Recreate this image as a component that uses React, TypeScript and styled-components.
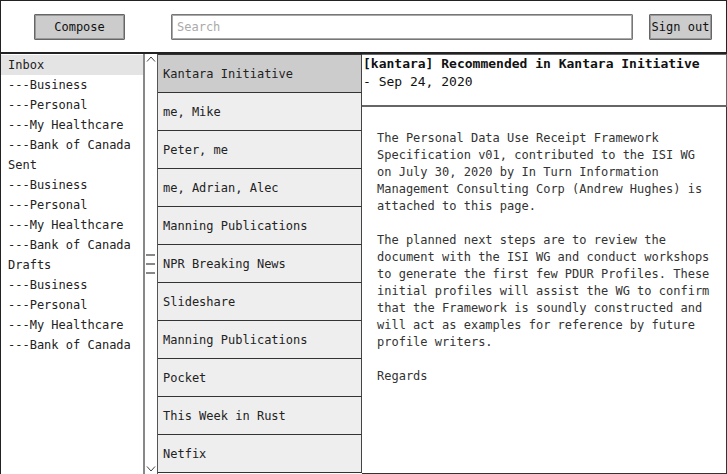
import React from 'react';
import styled, { createGlobalStyle } from 'styled-components';

const GlobalStyle = createGlobalStyle`
  html, body {
    margin: 0;
    padding: 0;
    background: #ffffff;
  }
  * {
    box-sizing: border-box;
  }
`;

const mono = `"DejaVu Sans Mono", "Liberation Mono", monospace`;

// Moldura geral
const Frame = styled.div`
  width: 727px;
  height: 474px;
  display: flex;
  flex-direction: column;
  font-family: ${mono};
  font-size: 12px;
  color: #222;
  overflow: hidden;
`;

// Barra superior
const TopBar = styled.div`
  height: 54px;
  flex-shrink: 0;
  display: flex;
  align-items: center;
  border: 1px solid #222;
  border-bottom-width: 2px;
  padding-left: 33px;
`;

const Button = styled.button<{ w: number }>`
  width: ${p => p.w}px;
  height: 26px;
  background: #cccccc;
  border: 1px solid #666;
  box-shadow: inset 0 0 0 1px #999;
  border-radius: 1px;
  font-family: ${mono};
  font-size: 12px;
  color: #111;
  padding: 0;
`;

const SearchInput = styled.input`
  width: 462px;
  height: 26px;
  margin-left: 46px;
  margin-right: 16px;
  border: 1px solid #777;
  box-shadow: inset 0 0 0 1px #aaa;
  border-radius: 1px;
  padding: 0 5px;
  font-family: ${mono};
  font-size: 12px;
  outline: none;

  &::placeholder {
    color: #aaa;
  }
`;

// Área principal
const Main = styled.div`
  flex: 1;
  display: flex;
  min-height: 0;
`;

// Lista de pastas
const Folders = styled.div`
  width: 143px;
  flex-shrink: 0;
  border-left: 1px solid #222;
  padding-top: 1px;
  background: #fff;
`;

const FolderRow = styled.div<{ active?: boolean }>`
  height: 20px;
  line-height: 20px;
  padding-left: 7px;
  white-space: pre;
  background: ${p => (p.active ? '#e4e4e4' : 'transparent')};
`;

const Scrollbar = styled.div`
  width: 15px;
  flex-shrink: 0;
  border-left: 2px solid #888;
  border-right: 1px solid #555;
  display: flex;
  flex-direction: column;
  justify-content: space-between;
  align-items: flex-start;
  padding: 2px 0 2px 1px;
`;

// Lista de mensagens
const Messages = styled.div`
  width: 204px;
  flex-shrink: 0;
  display: flex;
  flex-direction: column;
  border-top: 1px solid #333;
`;

const MessageRow = styled.div<{ active?: boolean }>`
  height: 38px;
  flex-shrink: 0;
  display: flex;
  align-items: center;
  padding-left: 5px;
  background: ${p => (p.active ? '#cccccc' : '#eeeeee')};
  border-bottom: 1px solid #333;
  border-right: 1px solid #444;
`;

// Painel de leitura
const Reader = styled.div`
  flex: 1;
  display: flex;
  flex-direction: column;
  min-width: 0;
`;

const Header = styled.div`
  height: 53px;
  flex-shrink: 0;
  border: 1px solid #666;
  border-bottom-width: 2px;
  border-left: none;
  padding: 0 0 0 1px;
  font-size: 13px;
  line-height: 18px;
  color: #111;
`;

const Subject = styled.div`
  font-weight: bold;
  white-space: nowrap;
`;

const Body = styled.div`
  flex: 1;
  border-right: 1px solid #333;
  border-bottom: 1px solid #333;
  padding: 23px 0 0 15px;
  line-height: 17px;
  color: #333;
`;

const Para = styled.p`
  margin: 0 0 17px;
  max-width: 336px;
`;

const folders = [
  'Inbox', '---Business', '---Personal', '---My Healthcare', '---Bank of Canada',
  'Sent', '---Business', '---Personal', '---My Healthcare', '---Bank of Canada',
  'Drafts', '---Business', '---Personal', '---My Healthcare', '---Bank of Canada',
];

const senders = [
  'Kantara Initiative', 'me, Mike', 'Peter, me', 'me, Adrian, Alec',
  'Manning Publications', 'NPR Breaking News', 'Slideshare', 'Manning Publications',
  'Pocket', 'This Week in Rust', 'Netfix',
];

const Chevron = ({ up }: { up?: boolean }) => (
  <svg width="10" height="6" viewBox="0 0 10 6">
    <path
      d={up ? 'M1 5.5 L5 1 L9 5.5' : 'M1 0.5 L5 5 L9 0.5'}
      fill="none"
      stroke="#444"
      strokeWidth="1"
    />
  </svg>
);

const Grip = () => (
  <svg width="10" height="22" viewBox="0 0 10 22">
    <rect x="0" y="1" width="9" height="2" fill="#888" />
    <rect x="0" y="10" width="9" height="2" fill="#888" />
    <rect x="0" y="19" width="9" height="2" fill="#888" />
  </svg>
);

export default function App() {
  return (
    <Frame>
      <GlobalStyle />
      <TopBar>
        <Button w={91}>Compose</Button>
        <SearchInput placeholder="Search" />
        <Button w={63}>Sign out</Button>
      </TopBar>
      <Main>
        <Folders>
          {folders.map((f, i) => (
            <FolderRow key={i} active={i === 0}>{f}</FolderRow>
          ))}
        </Folders>
        <Scrollbar>
          <Chevron up />
          <Grip />
          <Chevron />
        </Scrollbar>
        <Messages>
          {senders.map((s, i) => (
            <MessageRow key={i} active={i === 0}>{s}</MessageRow>
          ))}
        </Messages>
        <Reader>
          <Header>
            <Subject>[kantara] Recommended in Kantara Initiative</Subject>
            <div>- Sep 24, 2020</div>
          </Header>
          <Body>
            <Para>
              The Personal Data Use Receipt Framework Specification v01, contributed to the
              ISI WG on July 30, 2020 by In Turn Information Management Consulting Corp
              (Andrew Hughes) is attached to this page.
            </Para>
            <Para>
              The planned next steps are to review the document with the ISI WG and conduct
              workshops to generate the first few PDUR Profiles. These initial profiles will
              assist the WG to confirm that the Framework is soundly constructed and will act
              as examples for reference by future profile writers.
            </Para>
            <Para>Regards</Para>
          </Body>
        </Reader>
      </Main>
    </Frame>
  );
}
